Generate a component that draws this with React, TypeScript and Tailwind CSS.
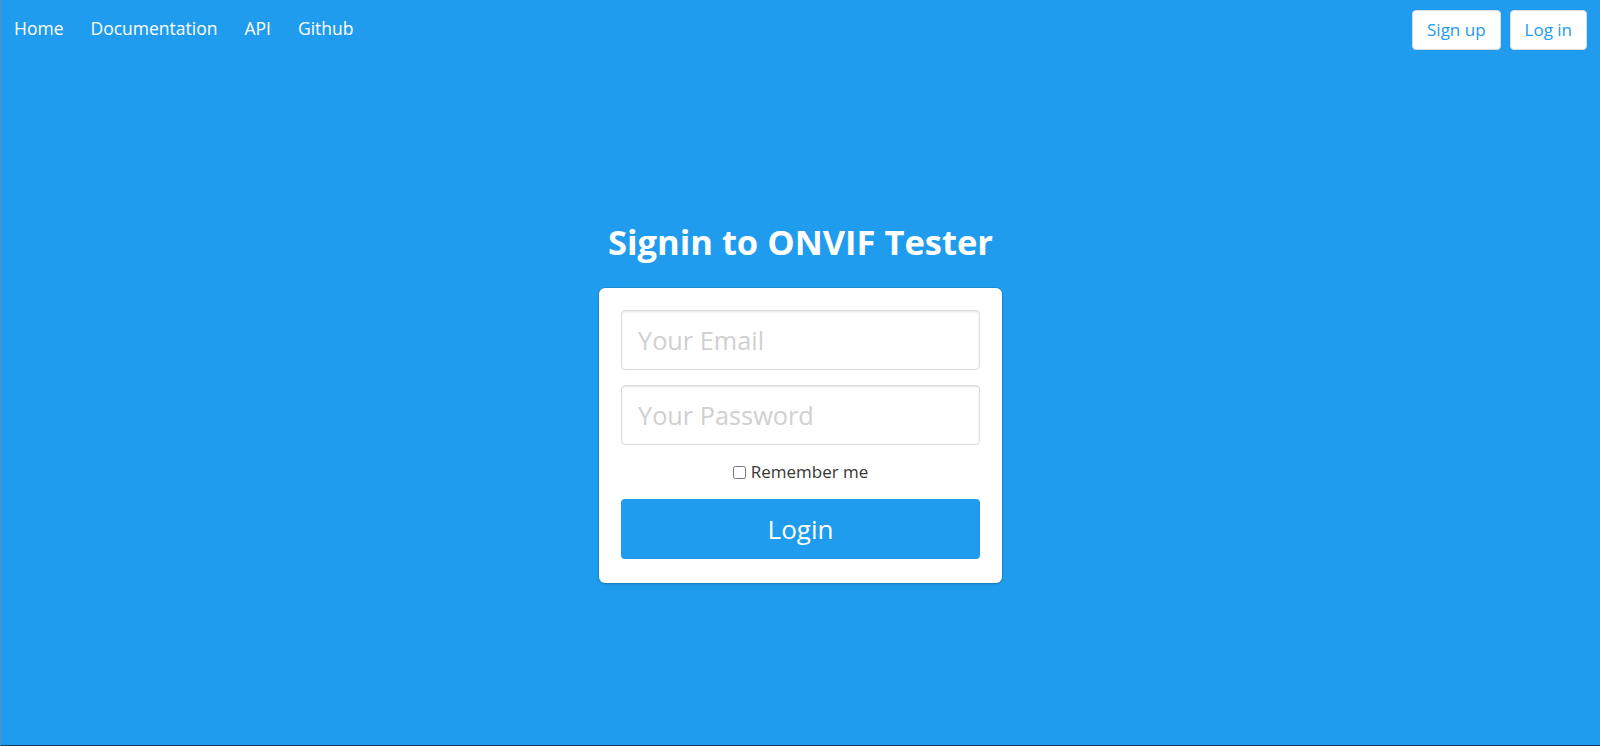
import React from "react";

export default function App() {
  const font = { fontFamily: '"Open Sans", "Noto Sans", sans-serif' };
  return (
    <div
      className="w-[1600px] h-[746px] bg-[#209cee] border-l border-l-[#5a8fb5] border-b border-b-[#1b3c5a] flex flex-col overflow-hidden"
      style={font}
    >
      <nav className="h-[57px] flex items-center justify-between pl-[13px] pr-[13px] shrink-0">
        <div className="flex items-center gap-[27px] text-white text-[17.5px]">
          <a className="cursor-pointer">Home</a>
          <a className="cursor-pointer">Documentation</a>
          <a className="cursor-pointer">API</a>
          <a className="cursor-pointer">Github</a>
        </div>
        <div className="flex items-center gap-[9px] pt-[2px]">
          <button className="h-[40px] px-[14px] bg-white rounded-[4px] border border-[#dbdbdb] text-[#209cee] text-[17px]">
            Sign up
          </button>
          <button className="h-[40px] px-[14px] bg-white rounded-[4px] border border-[#dbdbdb] text-[#209cee] text-[17px]">
            Log in
          </button>
        </div>
      </nav>
      <section className="flex flex-col items-center pt-[167px]">
        <h1 className="text-white font-bold text-[34.5px] leading-[36px] mb-[28px]">
          Signin to ONVIF Tester
        </h1>
        <div className="w-[403px] bg-white rounded-[6px] shadow-[0_2px_3px_rgba(10,10,10,0.1),0_0_0_1px_rgba(10,10,10,0.1)] pt-[22px] pb-[24px] px-[22px] flex flex-col">
          <input
            placeholder="Your Email"
            className="h-[60px] w-full border border-[#dbdbdb] rounded-[4px] px-[16px] text-[25.3px] text-[#363636] placeholder:text-[#d0d0d0] shadow-[inset_0_1px_2px_rgba(10,10,10,0.1)] outline-none"
          />
          <input
            type="password"
            placeholder="Your Password"
            className="mt-[15px] h-[60px] w-full border border-[#dbdbdb] rounded-[4px] px-[16px] text-[25.3px] text-[#363636] placeholder:text-[#d0d0d0] shadow-[inset_0_1px_2px_rgba(10,10,10,0.1)] outline-none"
          />
          <label className="mt-[15px] h-[24px] flex items-center justify-center gap-[5px] text-[17px] text-[#363636]">
            <input type="checkbox" className="w-[13px] h-[13px]" />
            <span>Remember me</span>
          </label>
          <button className="mt-[15px] h-[60px] w-full bg-[#209cee] rounded-[4px] text-white text-[26px]">
            Login
          </button>
        </div>
      </section>
    </div>
  );
}
